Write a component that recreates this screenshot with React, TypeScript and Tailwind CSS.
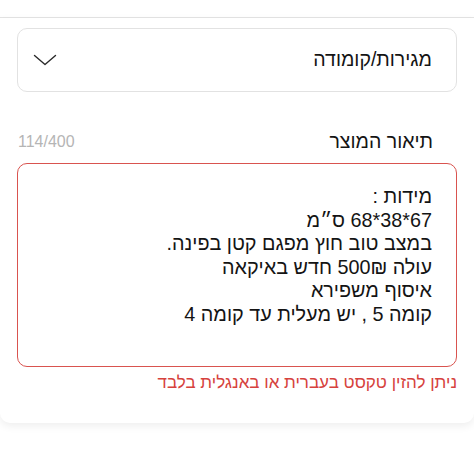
export default function App() {
  const lines = [
    "מידות :",
    "67*38*68 ס״מ",
    "במצב טוב חוץ מפגם קטן בפינה.",
    "עולה 500₪ חדש באיקאה",
    "איסוף משפירא",
    "קומה 5 , יש מעלית עד קומה 4",
  ];

  return (
    <div
      dir="rtl"
      className="w-[474px] h-[464px] bg-white overflow-hidden text-[#141414]"
      style={{ fontFamily: '"Liberation Sans", "DejaVu Sans", sans-serif' }}
    >
      {/* previous section edge */}
      <div className="h-[18px] bg-white border-b border-[#e4e4e4]" />

      {/* Card */}
      <div className="bg-white rounded-b-[10px] shadow-[0_3px_8px_rgba(0,0,0,0.07)] px-[17px] pt-[10px] pb-[29px]">
        {/* Category select */}
        <div className="h-[64px] border border-[#e2e2e2] rounded-[10px] flex items-center justify-between pr-[24px] pl-[15px]">
          <span className="text-[19.5px]">מגירות/קומודה</span>
          <svg width="24" height="12" viewBox="0 0 24 12" fill="none">
            <path d="M1.5 1.5 L12 10.5 L22.5 1.5" stroke="#2a2a2a" strokeWidth="1.4" strokeLinecap="round" strokeLinejoin="round" />
          </svg>
        </div>

        {/* Description label */}
        <div className="flex items-center justify-between mt-[38px] h-[24px]">
          <span className="text-[19.5px] pr-[24px]">תיאור המוצר</span>
          <span className="text-[16px] text-[#b5b5b5] pl-[1px]">114/400</span>
        </div>

        {/* Textarea */}
        <div className="mt-[9px] h-[204px] border-[1.5px] border-[#d9534f] rounded-[10px] pt-[21px] pr-[24px] pl-[20px]">
          {lines.map((line, i) => (
            <div key={i} className="text-[19.8px] leading-[23.6px] whitespace-pre">
              {line}
            </div>
          ))}
        </div>

        {/* Error */}
        <div className="mt-[5px] text-[17px] text-[#d6423d] leading-[22px]">
          ניתן להזין טקסט בעברית או באנגלית בלבד
        </div>
      </div>
    </div>
  );
}
